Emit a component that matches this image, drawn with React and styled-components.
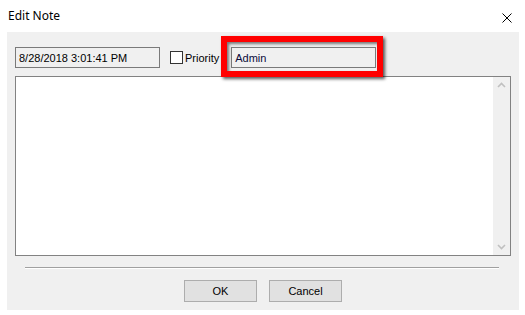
import React from 'react';
import styled, { createGlobalStyle } from 'styled-components';

const Global = createGlobalStyle`
    html, body {
        margin: 0;
        padding: 0;
        background: #ffffff;
    }
    body {
        width: 525px;
        height: 315px;
        overflow: hidden;
    }
`

const Window = styled.div`
    width: 525px;
    height: 315px;
    background: #ffffff;
    display: flex;
    flex-direction: column;
`

const TitleBar = styled.div`
    height: 32px;
    display: flex;
    align-items: center;
    justify-content: space-between;
    padding: 0 13px 0 8px;
    font-family: "Noto Sans", "Open Sans", sans-serif;
    font-size: 12px;
    color: #000000;
    box-sizing: border-box;
`

const Title = styled.span`
    margin-top: -1px;
`

const CloseIcon = styled.svg`
    width: 10px;
    height: 10px;
    margin-top: 3px;
`

const Body = styled.div`
    width: 512px;
    height: 278px;
    margin-left: 7px;
    background: #f0f0f0;
    box-sizing: border-box;
    padding: 15px 8px 0 8px;
    display: flex;
    flex-direction: column;
    font-family: "Liberation Sans", Arial, sans-serif;
    font-size: 11px;
    color: #000000;
`

const TopRow = styled.div`
    display: flex;
    align-items: center;
    height: 21px;
`

const Field = styled.div`
    position: relative;
    width: ${props => props.width}px;
    height: 21px;
    box-sizing: border-box;
    border: 1px solid #7a7a7a;
    background: #f0f0f0;
    display: flex;
    align-items: center;
    padding-left: 3px;
    color: ${props => props.dim ? '#000000' : '#0a0a3a'};
`

const CheckLabel = styled.label`
    display: flex;
    align-items: center;
    margin-left: 10px;
    margin-right: 12px;
`

const Box = styled.span`
    width: 13px;
    height: 13px;
    box-sizing: border-box;
    border: 1px solid #333333;
    background: #ffffff;
    margin-right: 2px;
`

const Highlight = styled.div`
    position: absolute;
    left: -11px;
    top: -12px;
    right: -8px;
    bottom: -10px;
    border: 6px solid #ff0000;
    box-shadow: 2px 2px 3px rgba(0, 0, 0, 0.65), inset 2px 2px 3px rgba(0, 0, 0, 0.5);
    pointer-events: none;
`

const NoteArea = styled.div`
    margin-top: 8px;
    width: 496px;
    height: 180px;
    box-sizing: border-box;
    border: 1px solid #828282;
    background: #ffffff;
    display: flex;
    justify-content: flex-end;
`

const ScrollBar = styled.div`
    width: 17px;
    background: #f0f0f0;
    display: flex;
    flex-direction: column;
    justify-content: space-between;
    align-items: center;
    padding: 5px 0;
`

const Arrow = styled.svg`
    width: 9px;
    height: 6px;
`

const Separator = styled.div`
    margin: 11px 0 0 10px;
    width: 474px;
    height: 1px;
    background: #a0a0a0;
    border-bottom: 1px solid #ffffff;
`

const ButtonRow = styled.div`
    display: flex;
    justify-content: center;
    gap: 12px;
    margin-top: 11px;
`

const Button = styled.button`
    width: 73px;
    height: 22px;
    box-sizing: border-box;
    border: 1px solid #adadad;
    background: #e1e1e1;
    font-family: "Liberation Sans", Arial, sans-serif;
    font-size: 11px;
    color: #000000;
    padding: 0;
`

const App = () => (
    <Window>
        <Global />
        <TitleBar>
            <Title>Edit Note</Title>
            <CloseIcon viewBox="0 0 10 10">
                <path d="M0.5 0.5 L9.5 9.5 M9.5 0.5 L0.5 9.5" stroke="#000" strokeWidth="1" />
            </CloseIcon>
        </TitleBar>
        <Body>
            <TopRow>
                <Field width={145} dim>8/28/2018 3:01:41 PM</Field>
                <CheckLabel>
                    <Box />
                    Priority
                </CheckLabel>
                <Field width={145}>
                    Admin
                    <Highlight />
                </Field>
            </TopRow>
            <NoteArea>
                <ScrollBar>
                    <Arrow viewBox="0 0 9 6">
                        <path d="M1 5 L4.5 1.5 L8 5" stroke="#c0c0c0" strokeWidth="1.6" fill="none" />
                    </Arrow>
                    <Arrow viewBox="0 0 9 6">
                        <path d="M1 1 L4.5 4.5 L8 1" stroke="#c0c0c0" strokeWidth="1.6" fill="none" />
                    </Arrow>
                </ScrollBar>
            </NoteArea>
            <Separator />
            <ButtonRow>
                <Button>OK</Button>
                <Button>Cancel</Button>
            </ButtonRow>
        </Body>
    </Window>
);

export default App;
